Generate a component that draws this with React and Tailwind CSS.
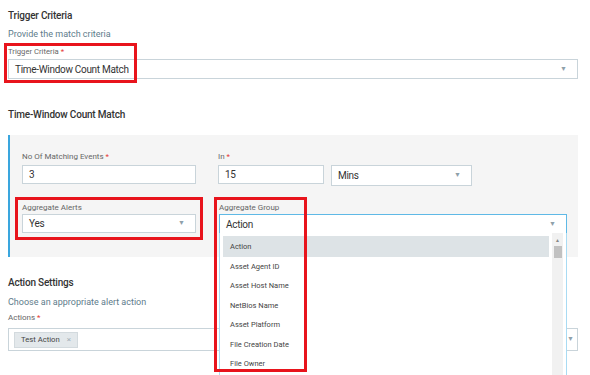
import React from "react";

const font = { fontFamily: "Roboto, 'Liberation Sans', sans-serif" };

const Arrow = () => (
    <span className="text-[7px] leading-none text-[#8fa0aa]">▼</span>
);

const Field = ({ className = "", children, arrow = false, borderClass = "border-[#c9d4da]" }) => (
    <div className={`flex items-center justify-between bg-white border ${borderClass} pl-[6px] pr-[10px] ${className}`}>
        <span className="text-[10px] tracking-[-0.3px] text-[#333]">{children}</span>
        {arrow && <Arrow />}
    </div>
);

const groups = [
    "Action",
    "Asset Agent ID",
    "Asset Host Name",
    "NetBios Name",
    "Asset Platform",
    "File Creation Date",
    "File Owner",
];

export default function App() {
    return (
        <div className="relative w-[590px] h-[375px] overflow-hidden bg-white px-2 pt-[9px]" style={font}>
            {/* Trigger criteria */}
            <h3 className="text-[10px] leading-[14px] font-medium tracking-[-0.2px] text-[#333]">Trigger Criteria</h3>
            <p className="mt-[4px] text-[9px] leading-[14px] text-[#5e7c8b]">Provide the match criteria</p>
            <div className="mt-[6px] text-[7.7px] leading-[10px] text-[#666]">
                Trigger Criteria <span className="text-[#e53935]">*</span>
            </div>
            <Field className="mt-[2px] w-[570px] h-[20px]" arrow>Time-Window Count Match</Field>

            <h3 className="mt-[29px] text-[10px] leading-[14px] font-medium tracking-[-0.2px] text-[#333]">Time-Window Count Match</h3>

            {/* Grey panel */}
            <div className="mt-[13px] w-[570px] h-[122px] bg-[#f5f5f5] border-l-2 border-[#3aa6de] pl-[12px] pt-[17px]">
                <div className="flex">
                    <div className="w-[196px]">
                        <div className="text-[8px] leading-[10px] text-[#666]">
                            No Of Matching Events <span className="text-[#e53935]">*</span>
                        </div>
                        <Field className="mt-[3px] w-[174px] h-[19px]">3</Field>
                    </div>
                    <div>
                        <div className="text-[8px] leading-[10px] text-[#666]">
                            In <span className="text-[#e53935]">*</span>
                        </div>
                        <div className="mt-[3px] flex gap-[7px]">
                            <Field className="w-[106px] h-[19px]">15</Field>
                            <Field className="w-[141px] h-[21px]" arrow>Mins</Field>
                        </div>
                    </div>
                </div>
                <div className="mt-[17px] flex">
                    <div className="w-[197px]">
                        <div className="text-[8px] leading-[10px] text-[#666]">Aggregate Alerts</div>
                        <Field className="mt-[1px] w-[174px] h-[19px]" arrow>Yes</Field>
                    </div>
                    <div>
                        <div className="text-[8px] leading-[10px] text-[#666]">Aggregate Group</div>
                        <Field className="mt-[1px] w-[348px] h-[20px]" borderClass="border-[#5fb9e6]" arrow>Action</Field>
                    </div>
                </div>
            </div>

            {/* Action settings */}
            <h3 className="mt-[19px] text-[10px] leading-[14px] font-medium tracking-[-0.2px] text-[#333]">Action Settings</h3>
            <p className="mt-[5px] text-[9px] leading-[14px] text-[#5e7c8b]">Choose an appropriate alert action</p>
            <div className="mt-[4px] text-[8px] leading-[10px] text-[#666]">
                Actions <span className="text-[#e53935]">*</span>
            </div>
            <div className="mt-[5px] w-[570px] h-[23px] bg-white border border-[#c9d4da] flex items-center justify-between pl-[5px] pr-[3px]">
                <span className="flex items-center gap-[7px] h-[16px] px-[6px] bg-[#e3e8eb] border border-[#d3dade] text-[7.7px] text-[#444]">
                    Test Action <span className="text-[#a3b0b8] text-[8px]">×</span>
                </span>
                <Arrow />
            </div>

            {/* Open dropdown */}
            <div className="absolute left-[219px] top-[233px] w-[348px] h-[150px] bg-white border-x border-[#a9dbf3] flex pl-[3px] pt-[3px]">
                <div className="flex-1">
                    {groups.map((g, i) => (
                        <div
                            key={g}
                            className={`h-[19.4px] flex items-center pl-[7px] text-[7.5px] text-[#444] ${i === 0 ? "h-[21px] bg-[#dde3e6]" : ""}`}
                        >
                            {g}
                        </div>
                    ))}
                </div>
                <div className="w-[11px] ml-[3px] mr-[3px] -mt-[3px] bg-[#f1f1f1] flex flex-col items-center pt-[5px]">
                    <span className="text-[5px] leading-none text-[#888]">▲</span>
                    <div className="mt-[3px] w-[8px] h-[12px] bg-[#c1c1c1]"></div>
                </div>
            </div>

            {/* Annotation boxes */}
            <div className="absolute left-[4px] top-[43px] w-[133px] h-[40px] border-[3px] border-[#e8141c]"></div>
            <div className="absolute left-[15px] top-[197px] w-[188px] h-[43px] border-[3px] border-[#e8141c]"></div>
            <div className="absolute left-[214px] top-[197px] w-[93px] h-[175px] border-[3px] border-[#e8141c]"></div>
        </div>
    );
}
